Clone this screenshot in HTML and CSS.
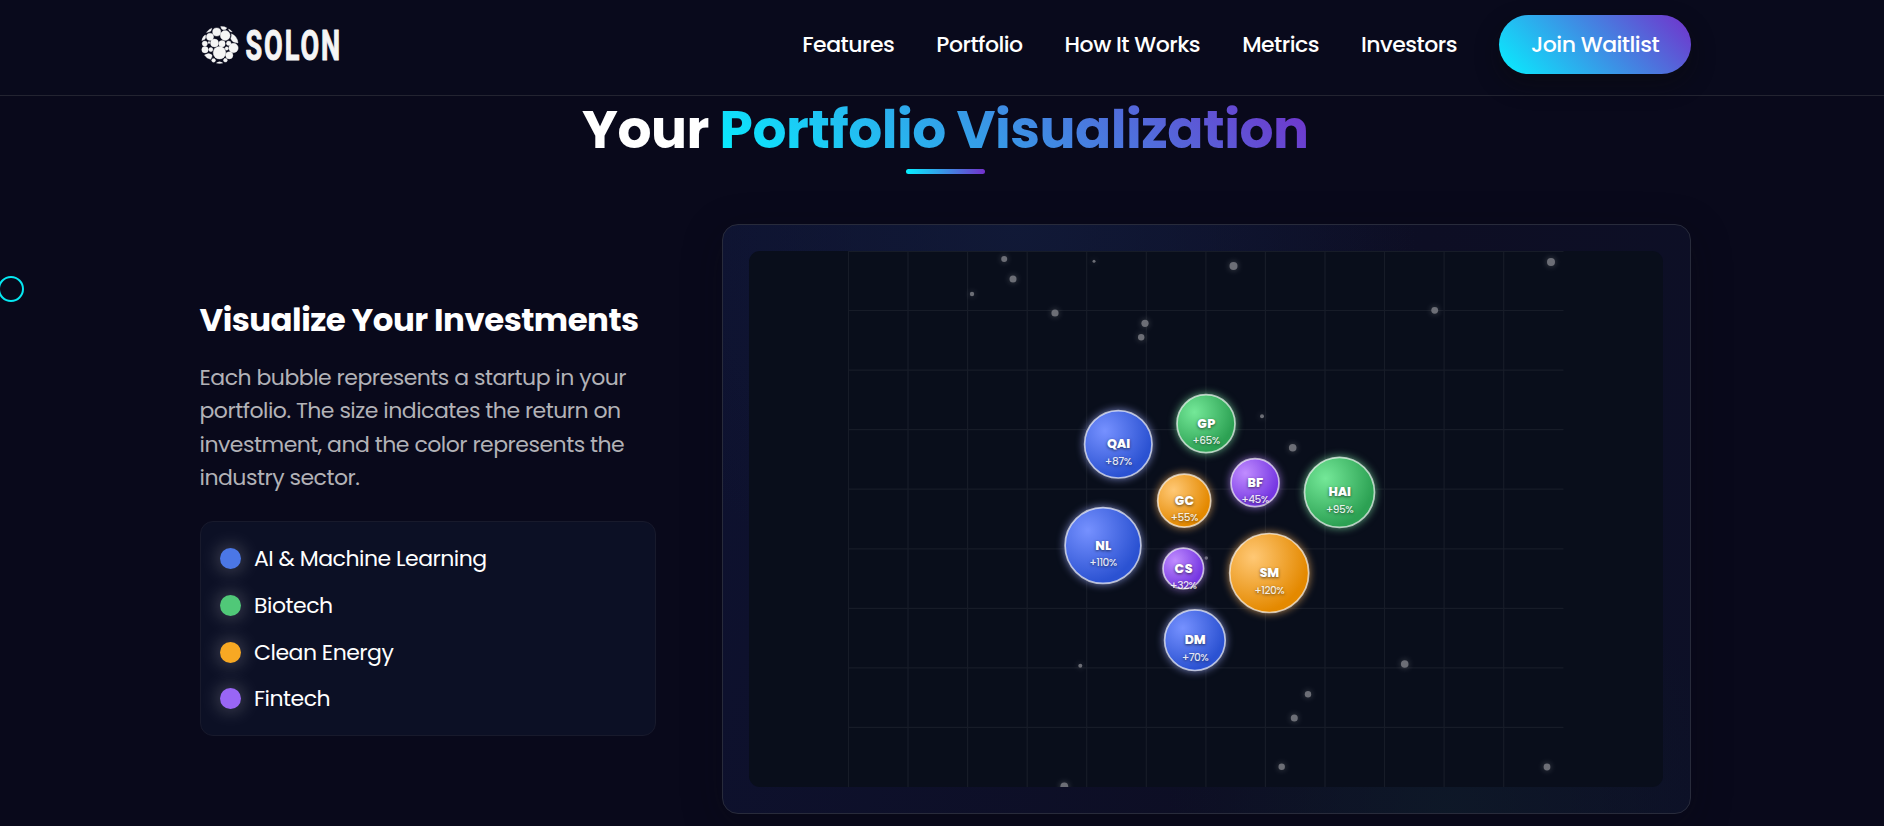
FILE: index.html
```
<!DOCTYPE html>
<html lang="en">
<head>
  <meta charset="UTF-8" />
  <meta name="viewport" content="width=device-width, initial-scale=1.0" />
  <title>Solon - Portfolio Visualization</title>
  <link rel="stylesheet" href="styles.css">
</head>
<body>
  <div class="cursor"></div>

  <header class="header">
    <a class="logo" href="#">
      <svg width="150" height="60" viewBox="0 -10 150 60">
        <g class="logo-mark">
          <circle cx="19.5" cy="27.7" r="6.300" />
          <circle cx="25.200" cy="10.500" r="4.900" />
          <circle cx="14.500" cy="18" r="4" />
          <circle cx="16.700" cy="7" r="4.100" />
          <circle cx="10" cy="11.800" r="3.600" />
          <circle cx="33.500" cy="23" r="4.700" />
          <circle cx="29.300" cy="30.300" r="3.600" />
          <circle cx="22" cy="18.800" r="3.200" />
          <circle cx="5" cy="24.700" r="3.200" />
          <circle cx="4.800" cy="18.600" r="2.600" />
          <circle cx="10.800" cy="24.600" r="2.100" />
          <circle cx="28.700" cy="18.300" r="2.300" />
          <circle cx="26.700" cy="23.500" r="1.700" />
          <circle cx="13.600" cy="35.300" r="1.900" />
          <circle cx="25.400" cy="35.200" r="1.900" />
          <circle cx="9" cy="17.600" r="1" />
          <path d="M1.800 15.500Q3 10.500 5.600 10Q6.200 13 4.500 14.500Z" />
          <path d="M6.500 7.400Q9 4 11.800 3.200Q11.500 6 9.500 6.800Z" />
          <path d="M20.700 1.600Q25 1.500 26.800 2.900Q26 5 23.200 4.800Q21.200 4.500 20.700 1.600Z" />
          <path d="M28.500 4Q31 5 32.200 7Q29.200 7 28.500 4Z" />
          <path d="M31.500 8.800Q37.500 11.500 38 18Q31.800 17.500 30.800 13.500Q32 11 31.500 8.800Z" />
          <path d="M4.500 30Q9 27 12 30Q12.500 32.500 10.500 34.300Q6.500 33.500 4.500 30Z" />
          <path d="M16.500 38Q19.500 35.500 22.700 38Q19.500 38.800 16.500 38Z" />
        </g>
        <text class="logo-text" x="45.500" y="34.600" textLength="96.500" lengthAdjust="spacingAndGlyphs">SOLON</text>
      </svg>
    </a>
    <nav class="nav">
      <a href="#">Features</a>
      <a href="#">Portfolio</a>
      <a href="#">How It Works</a>
      <a href="#">Metrics</a>
      <a href="#">Investors</a>
      <a class="btn" href="#">Join Waitlist</a>
    </nav>
  </header>

  <section class="portfolio">
    <h2 class="section-title">Your <span>Portfolio Visualization</span></h2>
    <div class="content">
      <div class="info">
        <h3>Visualize Your Investments</h3>
        <p>Each bubble represents a startup in your<br>portfolio. The size indicates the return on<br>investment, and the color represents the<br>industry sector.</p>
        <ul class="legend">
          <li><span class="dot ai"></span>AI &amp; Machine Learning</li>
          <li><span class="dot biotech"></span>Biotech</li>
          <li><span class="dot energy"></span>Clean Energy</li>
          <li><span class="dot fintech"></span>Fintech</li>
        </ul>
      </div>

      <div class="chart-card">
        <svg class="chart" width="914" height="536" viewBox="749 251 914 536">
          <defs>
            <radialGradient id="blue" cx="30%" cy="30%" r="70%">
              <stop offset="0%" stop-color="#7691ff" />
              <stop offset="100%" stop-color="#2b52d2" />
            </radialGradient>
            <radialGradient id="green" cx="30%" cy="30%" r="70%">
              <stop offset="0%" stop-color="#74e898" />
              <stop offset="100%" stop-color="#2ca153" />
            </radialGradient>
            <radialGradient id="orange" cx="30%" cy="30%" r="70%">
              <stop offset="0%" stop-color="#ffc875" />
              <stop offset="100%" stop-color="#e48900" />
            </radialGradient>
            <radialGradient id="purple" cx="30%" cy="30%" r="70%">
              <stop offset="0%" stop-color="#c08cff" />
              <stop offset="100%" stop-color="#7637e2" />
            </radialGradient>
          </defs>

          <!-- grid -->
          <path class="grid" d="M848.500 251V787M908 251V787M967.600 251V787M1027.200 251V787M1086.700 251V787M1146.300 251V787M1205.900 251V787M1265.400 251V787M1325 251V787M1384.500 251V787M1444.100 251V787M1503.700 251V787M848 251.300H1563.500M848 310.500H1563.500M848 370.100H1563.500M848 429.700H1563.500M848 489.200H1563.500M848 548.800H1563.500M848 608.400H1563.500M848 667.900H1563.500M848 727.400H1563.500" />

          <!-- particles -->
          <g class="particles">
            <circle cx="1004.200" cy="259" r="3" />
            <circle cx="1013" cy="279" r="3.500" />
            <circle cx="972" cy="294" r="2.200" />
            <circle cx="1094" cy="261.300" r="1.500" />
            <circle cx="1233.500" cy="266" r="4" />
            <circle cx="1055" cy="313" r="3.600" />
            <circle cx="1145" cy="323.300" r="3.600" />
            <circle cx="1141.200" cy="337.300" r="3.200" />
            <circle cx="1551" cy="262" r="4" />
            <circle cx="1434.700" cy="310.300" r="3.400" />
            <circle cx="1262" cy="416.300" r="2" />
            <circle cx="1292.700" cy="447.700" r="3.800" />
            <circle cx="1206.300" cy="558" r="1.700" />
            <circle cx="1080.300" cy="665.700" r="2" />
            <circle cx="1404.700" cy="664" r="3.800" />
            <circle cx="1308" cy="694.300" r="3.200" />
            <circle cx="1294.300" cy="718" r="3.500" />
            <circle cx="1281.700" cy="766.700" r="3.200" />
            <circle cx="1547" cy="767" r="3.400" />
            <circle cx="1064.300" cy="786.500" r="3.900" />
          </g>

          <g class="bubble ai" transform="translate(1118.300 444.300)">
            <circle r="33.700" fill="url(#blue)" />
            <text class="name" y="4" textLength="22.500">QAI</text>
            <text class="roi" y="20.500" textLength="27">+87%</text>
          </g>
          <g class="bubble biotech" transform="translate(1206 423.700)">
            <circle r="29" fill="url(#green)" />
            <text class="name" y="4" textLength="17.500">GP</text>
            <text class="roi" y="20.500" textLength="27.500">+65%</text>
          </g>
          <g class="bubble biotech" transform="translate(1339.500 492.300)">
            <circle r="35" fill="url(#green)" />
            <text class="name" y="4" textLength="22">HAI</text>
            <text class="roi" y="20.500" textLength="27.500">+95%</text>
          </g>
          <g class="bubble fintech" transform="translate(1255 482.700)">
            <circle r="24" fill="url(#purple)" />
            <text class="name" y="4" textLength="15">BF</text>
            <text class="roi" y="20.500" textLength="27.500">+45%</text>
          </g>
          <g class="bubble energy" transform="translate(1184.200 500.700)">
            <circle r="26.500" fill="url(#orange)" />
            <text class="name" y="4" textLength="19">GC</text>
            <text class="roi" y="20.500" textLength="27.500">+55%</text>
          </g>
          <g class="bubble ai" transform="translate(1103 545.500)">
            <circle r="37.900" fill="url(#blue)" />
            <text class="name" y="4" textLength="15.500">NL</text>
            <text class="roi" y="20.500" textLength="27.500">+110%</text>
          </g>
          <g class="bubble fintech" transform="translate(1183.300 568.500)">
            <circle r="20.300" fill="url(#purple)" />
            <text class="name" y="4" textLength="17.500">CS</text>
            <text class="roi" y="20.500" textLength="26.500">+32%</text>
          </g>
          <g class="bubble energy" transform="translate(1269.200 573)">
            <circle r="39.500" fill="url(#orange)" />
            <text class="name" y="4" textLength="19">SM</text>
            <text class="roi" y="20.500" textLength="30">+120%</text>
          </g>
          <g class="bubble ai" transform="translate(1194.900 640.200)">
            <circle r="30.300" fill="url(#blue)" />
            <text class="name" y="4" textLength="20.500">DM</text>
            <text class="roi" y="20.500" textLength="26.500">+70%</text>
          </g>
        </svg>
      </div>
    </div>
  </section>
</body>
</html>
```
FILE: styles.css
```
* {
  box-sizing: border-box;
  margin: 0;
  padding: 0;
}
body {
  height: 826px;
  overflow: hidden;
  font-family: 'Poppins', 'Inter', 'Open Sans', sans-serif;
  font-size: 22px;
  letter-spacing: -0.5px;
  background: #09091b;
  color: #fff;
}
a {
  color: #fff;
  text-decoration: none;
}

/* header */
.header {
  display: flex;
  justify-content: space-between;
  height: 96px;
  padding: 15px 193px 0 200px;
  border-bottom: 1px solid #232431;
  background: #090a1c;
}
.logo-mark {
  fill: #f5f5f5;
  stroke: #f5f5f5;
  stroke-width: 0.4;
}
.logo-text {
  font-family: 'Roboto', sans-serif;
  font-weight: 700;
  font-size: 42px;
  letter-spacing: 3px;
  fill: #f5f5f5;
  stroke: #f5f5f5;
  stroke-width: 1;
  stroke-linejoin: round;
}
.nav {
  display: flex;
  align-items: center;
  gap: 42px;
  height: 59px;
  font-weight: 500;
}
.btn {
  width: 192px;
  height: 59px;
  line-height: 60px;
  text-align: center;
  border-radius: 30px;
  background: linear-gradient(45deg, #06f0ff, #7330cb);
  box-shadow: 0 10px 25px rgba(10, 10, 10, 0.45);
}

/* section */
.portfolio {
  width: 1491.5px;
  margin-left: 199.5px;
}
.section-title {
  position: relative;
  height: 128px;
  padding-top: 1px;
  line-height: 65px;
  text-align: center;
  font-size: 53.4px;
  font-weight: 700;
}
.section-title span {
  background: linear-gradient(45deg, #06f0ff, #7330cb);
  -webkit-background-clip: text;
  background-clip: text;
  color: transparent;
}
.section-title::after {
  content: '';
  position: absolute;
  left: 50%;
  top: 73px;
  width: 79px;
  height: 5px;
  margin-left: -39.5px;
  border-radius: 3px;
  background: linear-gradient(90deg, #06f0ff, #7330cb);
}
.content {
  display: flex;
  justify-content: space-between;
  height: 590px;
}
.info {
  width: 456px;
  padding-top: 73px;
}
.info h3 {
  height: 64px;
  line-height: 46px;
  font-size: 32.4px;
  font-weight: 700;
  white-space: nowrap;
}
.info p {
  margin-bottom: 26px;
  line-height: 33.4px;
  color: #b2b2b7;
  white-space: nowrap;
}
.legend {
  display: flex;
  flex-direction: column;
  height: 215px;
  padding: 14px 19px 12px;
  list-style: none;
  border: 1px solid #181a2c;
  border-radius: 13px;
  background: #0c1025;
}
.legend li {
  display: flex;
  align-items: center;
  gap: 13.5px;
  height: 46.6px;
}
.dot {
  width: 21px;
  height: 21px;
  border-radius: 50%;
  box-shadow: 0 0 20px rgba(255, 255, 255, 0.35);
}
.dot.ai { background: #4b77e6; }
.dot.biotech { background: #50c878; }
.dot.energy { background: #f7a823; }
.dot.fintech { background: #9966f5; }

/* chart */
.chart-card {
  width: 969px;
  height: 590px;
  padding: 26px;
  border: 1px solid #282b3b;
  border-radius: 16px;
  background:
    radial-gradient(circle at 30% 0%, rgba(17, 26, 56, 0.9), transparent 45%),
    radial-gradient(circle at 75% 100%, rgba(14, 26, 40, 0.8), transparent 30%),
    linear-gradient(110deg, #0e1230, #0d0e24 60%, #0d1027);
  box-shadow: 0 10px 40px rgba(10, 10, 16, 0.3);
}
.chart {
  display: block;
  border-radius: 11px;
  background: #090e1b;
}
.grid {
  fill: none;
  stroke: rgba(255, 255, 255, 0.06);
  stroke-width: 1.2;
}
.particles {
  fill: #6c6e76;
  filter: drop-shadow(0 0 3px rgba(255, 255, 255, 0.25));
}
.bubble circle {
  stroke: rgba(255, 255, 255, 0.65);
  stroke-width: 1.7;
}
.bubble.ai circle { filter: drop-shadow(0 0 4px rgba(160, 175, 255, 0.75)); }
.bubble.biotech circle { filter: drop-shadow(0 0 4px rgba(130, 230, 165, 0.75)); }
.bubble.energy circle { filter: drop-shadow(0 0 4px rgba(255, 185, 100, 0.75)); }
.bubble.fintech circle { filter: drop-shadow(0 0 4px rgba(185, 140, 255, 0.75)); }
.bubble text {
  text-anchor: middle;
  fill: #fff;
  text-shadow: 0 1px 3px rgba(0, 0, 0, 0.6);
}
.bubble .name {
  font-size: 12.7px;
  font-weight: 800;
}
.bubble .roi {
  font-size: 10.7px;
  font-weight: 500;
  fill: rgba(255, 255, 255, 0.88);
}

/* custom mouse pointer */
.cursor {
  position: absolute;
  left: -2px;
  top: 276px;
  width: 26px;
  height: 26px;
  border: 2px solid #06e8f2;
  border-radius: 50%;
}
```
